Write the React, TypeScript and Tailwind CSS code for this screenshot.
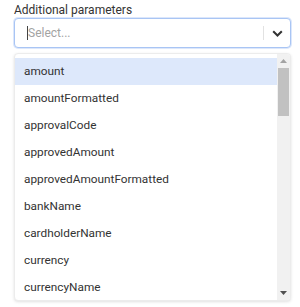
import React from 'react';

const options = [
  'amount',
  'amountFormatted',
  'approvalCode',
  'approvedAmount',
  'approvedAmountFormatted',
  'bankName',
  'cardholderName',
  'currency',
  'currencyName',
];

export default function App() {
  return (
    <div className="w-[300px] h-[307px] bg-white pl-[14px] pr-[9px] pt-[3px]" style={{ fontFamily: 'Roboto, "Liberation Sans", sans-serif' }}>
      <div className="text-[12px] leading-[14px] text-[#333] mb-[1px]">Additional parameters</div>
      <div className="h-[30px] flex items-center rounded-[4px] border border-[#a9c5f4] shadow-[0_0_0_1px_#dce7fb] bg-white">
        <div className="flex-1 flex items-center pl-[12px]">
          <span className="w-px h-[14px] bg-[#444]" />
          <span className="text-[12px] text-[#a3a3a3]">Select...</span>
        </div>
        <span className="w-px h-[14px] bg-[#e2e2e2]" />
        <div className="w-[26px] flex items-center justify-center">
          <svg width="11" height="7" viewBox="0 0 11 7" fill="none">
            <path d="M1.2 1.2 L5.5 5.5 L9.8 1.2" stroke="#333" strokeWidth="2" />
          </svg>
        </div>
      </div>
      <div className="mt-[5px] h-[248px] flex rounded-[4px] border border-[#ececec] shadow-[0_1px_3px_rgba(0,0,0,0.12)] bg-white overflow-hidden">
        <div className="flex-1 pt-[4px] overflow-hidden">
          {options.map((o, i) => (
            <div
              key={o}
              className={`h-[27px] flex items-center pl-[9px] text-[11.8px] text-[#333] ${i === 0 ? 'bg-[#dde8fb]' : ''}`}
            >
              {o}
            </div>
          ))}
        </div>
        <div className="w-[13px] bg-[#f1f1f1] flex flex-col items-center">
          <div className="h-[14px] flex items-center justify-center">
            <svg width="7" height="4" viewBox="0 0 7 4"><path d="M0 4 L3.5 0 L7 4 Z" fill="#a3a3a3" /></svg>
          </div>
          <div className="w-[11px] h-[48px] bg-[#c1c1c1]" />
          <div className="flex-1" />
          <div className="h-[14px] flex items-center justify-center">
            <svg width="7" height="4" viewBox="0 0 7 4"><path d="M0 0 L3.5 4 L7 0 Z" fill="#505050" /></svg>
          </div>
        </div>
      </div>
    </div>
  );
}
